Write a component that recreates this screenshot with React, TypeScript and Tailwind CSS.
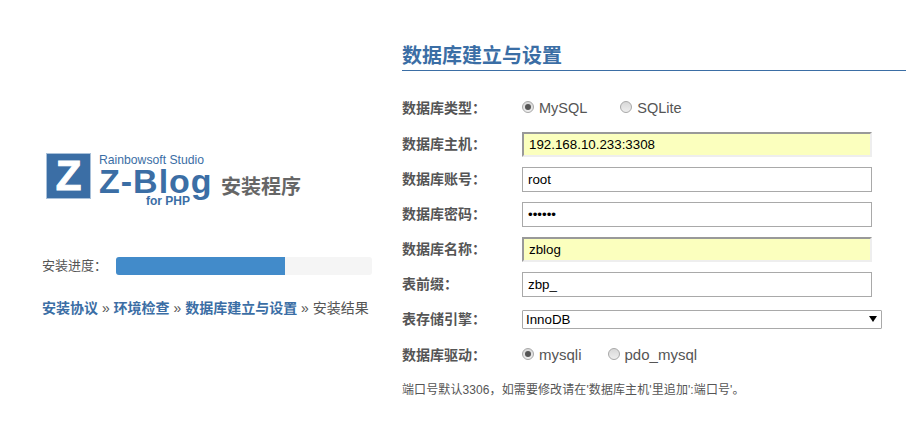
const FONT = "font-['Liberation_Sans','Noto_Sans_CJK_SC',sans-serif]";

function Radio({ label, checked, className, size }: { label: string; checked?: boolean; className?: string; size?: string }) {
  return (
    <div className={`flex items-center ${className ?? ""}`}>
      <span className="w-[12px] h-[12px] rounded-full border border-[#a8a8a8] bg-gradient-to-b from-[#d8d8d8] to-[#eeeeee] flex items-center justify-center shrink-0 -mt-[3px]">
        {checked && <span className="w-[6px] h-[6px] rounded-full bg-[#555]" />}
      </span>
      <span className={`ml-[5px] mt-[1px] text-[#555] ${size ?? "text-[14.5px]"}`}>{label}</span>
    </div>
  );
}

function Field({ label, value, type, auto }: { label: string; value: string; type?: string; auto?: boolean }) {
  return (
    <div className="flex items-center h-[25px] mb-[10px]">
      <Label text={label} />
      <input
        readOnly
        type={type ?? "text"}
        value={value}
        className={
          auto
            ? "w-[350px] h-[25px] px-[5px] text-[13.333px] text-black bg-[#fbffbe] outline-none border-2 border-t-[#999] border-l-[#999] border-r-[#eee] border-b-[#eee]"
            : "w-[350px] h-[25px] px-[5px] text-[13.333px] text-black bg-white outline-none border border-[#a9a9a9]"
        }
      />
    </div>
  );
}

function Label({ text }: { text: string }) {
  return <div className="w-[120px] shrink-0 text-[14px] font-bold text-[#555]">{text}</div>;
}

export default function App() {
  return (
    <div className={`${FONT} w-[906px] h-[427px] bg-white flex overflow-hidden text-[#555]`}>
      <aside className="w-[402px] shrink-0 pl-[42px] pt-[153px]">
        <div className="flex items-start pl-[4px] h-[46px]">
          <div className="w-[45px] h-[46px] bg-[#3b6ea5] border border-[#a9c1da] flex items-center justify-center shrink-0">
            <span className="text-[42px] leading-none font-bold text-white [-webkit-text-stroke:1px_white]">Z</span>
          </div>
          <div className="ml-[8px] w-[114px] flex flex-col text-[#3b6ea5]">
            <span className="text-[12.2px] leading-[14px] whitespace-nowrap">Rainbowsoft Studio</span>
            <span className="text-[34px] leading-[29px] tracking-[1px] font-bold whitespace-nowrap">Z-Blog</span>
            <span className="text-[12px] leading-[11px] font-bold whitespace-nowrap ml-[47px]">for PHP</span>
          </div>
          <span className="ml-[8px] mt-[20px] text-[20px] leading-[28px] font-bold text-[#666] whitespace-nowrap">安装程序</span>
        </div>

        <div className="flex items-center mt-[58px] h-[18px]">
          <span className="w-[74px] text-[13px] shrink-0">安装进度：</span>
          <div className="w-[256px] h-[18px] rounded-[3px] bg-[#f5f5f5] overflow-hidden">
            <div className="h-full bg-[#428bca]" style={{ width: "66%" }} />
          </div>
        </div>

        <div className="mt-[23px] text-[14px] leading-[20px] whitespace-nowrap text-[#555]">
          <a className="font-bold text-[#3b6ea5]">安装协议</a> » <a className="font-bold text-[#3b6ea5]">环境检查</a> »{" "}
          <a className="font-bold text-[#3b6ea5]">数据库建立与设置</a> » 安装结果
        </div>
      </aside>

      <main className="flex-1 pt-[44px]">
        <h2 className="h-[27px] border-b border-[#3b6ea5] text-[20px] leading-[25px] font-bold text-[#3b6ea5]">数据库建立与设置</h2>

        <div className="flex items-center h-[22px] mt-[26px] mb-[13px]">
          <Label text="数据库类型：" />
          <Radio label="MySQL" checked />
          <Radio label="SQLite" className="ml-[33px]" />
        </div>

        <Field label="数据库主机：" value="192.168.10.233:3308" auto />
        <Field label="数据库账号：" value="root" />
        <Field label="数据库密码：" value="123456" type="password" />
        <Field label="数据库名称：" value="zblog" auto />
        <Field label="表前缀：" value="zbp_" />

        <div className="flex items-center h-[19px] mt-[13px]">
          <Label text="表存储引擎：" />
          <div className="relative w-[360px] h-[19px]">
            <select className="block w-full h-full appearance-none rounded-[1px] border border-[#a9a9a9] bg-white pl-[3px] text-[13.333px] leading-none text-black outline-none">
              <option>InnoDB</option>
            </select>
            <span className="absolute right-[5px] top-[6px] w-0 h-0 border-x-[4px] border-x-transparent border-t-[6px] border-t-black" />
          </div>
        </div>

        <div className="flex items-center h-[22px] mt-[15px]">
          <Label text="数据库驱动：" />
          <Radio label="mysqli" checked size="text-[15px]" />
          <Radio label="pdo_mysql" className="ml-[26px]" size="text-[15px]" />
        </div>

        <p className="mt-[15px] text-[12px] leading-[18px] tracking-[0.1px] text-[#555]">端口号默认3306，如需要修改请在'数据库主机'里追加':端口号'。</p>
      </main>
    </div>
  );
}
